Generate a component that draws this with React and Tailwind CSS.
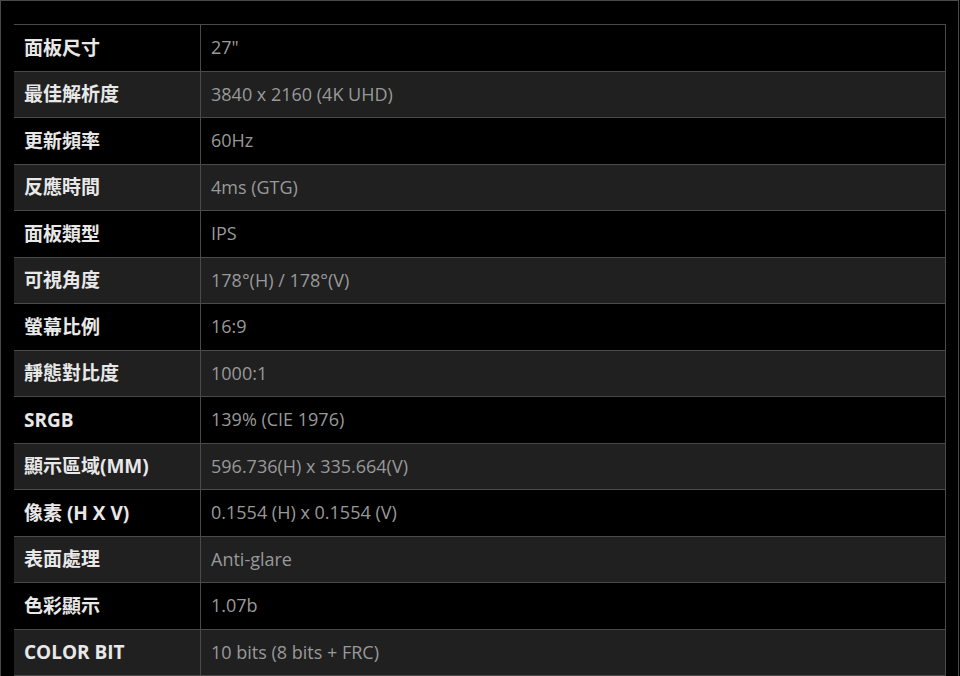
import React from "react";

const rows = [
  ["面板尺寸", "27\""],
  ["最佳解析度", "3840 x 2160 (4K UHD)"],
  ["更新頻率", "60Hz"],
  ["反應時間", "4ms (GTG)"],
  ["面板類型", "IPS"],
  ["可視角度", "178°(H) / 178°(V)"],
  ["螢幕比例", "16:9"],
  ["靜態對比度", "1000:1"],
  ["SRGB", "139% (CIE 1976)"],
  ["顯示區域(MM)", "596.736(H) x 335.664(V)"],
  ["像素 (H X V)", "0.1554 (H) x 0.1554 (V)"],
  ["表面處理", "Anti-glare"],
  ["色彩顯示", "1.07b"],
  ["COLOR BIT", "10 bits (8 bits + FRC)"],
];

export default function App() {
  return (
    <div className="w-[960px] h-[676px] overflow-hidden bg-black">
      <div className="w-[959px] h-[700px] border-l border-t border-r border-[#4a4a4a] pl-[13px] pr-[12px] pt-[23px]">
        <div className="border-t border-r border-[#4a4a4a]">
          {rows.map(([label, value], i) => (
            <div
              key={i}
              className={
                "flex h-[46.5px] border-b border-[#4a4a4a] " +
                (i % 2 === 0 ? "bg-black" : "bg-[#202020]")
              }
            >
              <div
                className="w-[187px] shrink-0 border-r border-[#4a4a4a] flex items-center pl-[10px] text-[19px] font-bold text-[#e8e8e8]"
                style={{ fontFamily: '"Open Sans", "Noto Sans CJK TC", sans-serif' }}
              >
                {label}
              </div>
              <div
                className="flex-1 flex items-center pl-[10px] text-[18px] font-normal text-[#999999]"
                style={{ fontFamily: '"Open Sans", "Noto Sans CJK TC", sans-serif' }}
              >
                {value}
              </div>
            </div>
          ))}
        </div>
      </div>
    </div>
  );
}
